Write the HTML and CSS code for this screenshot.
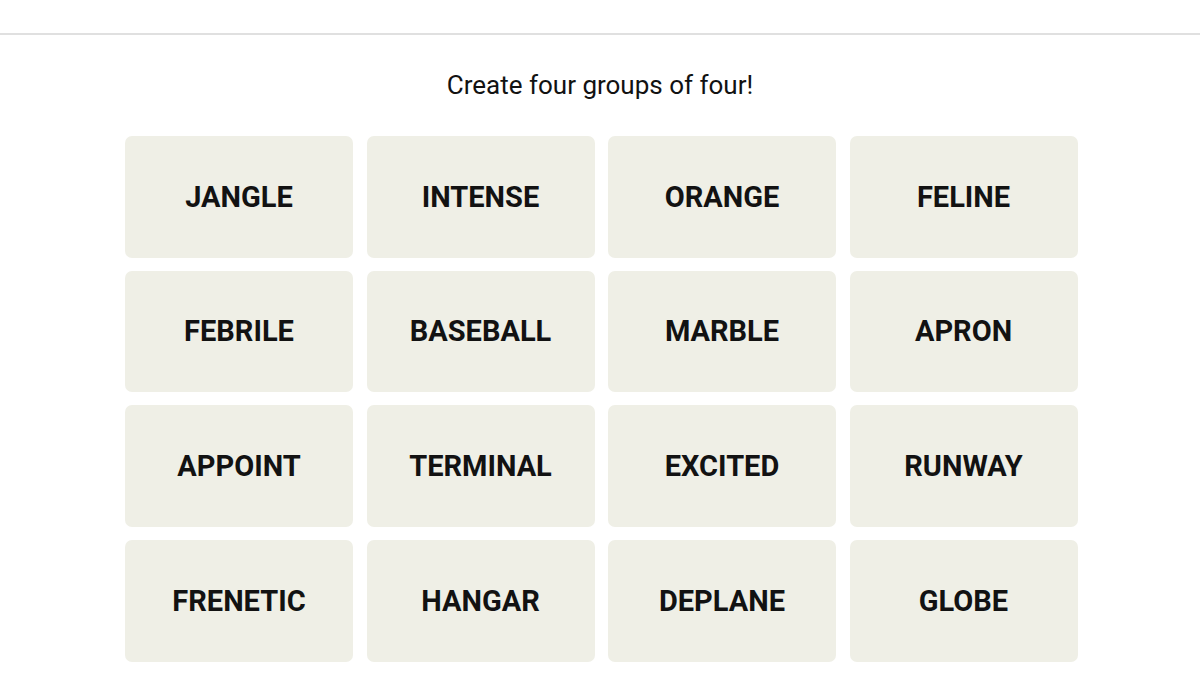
FILE: index.html
```html
<!DOCTYPE html>
<html>
    <head>
        <title>Connections</title>
        <link rel="stylesheet" href="styles.css">
    </head>
    <body>
        <div class="topbar"></div>

        <main class="board">
            <p class="prompt">Create four groups of four!</p>

            <div class="grid">
                <button class="tile">JANGLE</button>
                <button class="tile">INTENSE</button>
                <button class="tile">ORANGE</button>
                <button class="tile">FELINE</button>

                <button class="tile">FEBRILE</button>
                <button class="tile">BASEBALL</button>
                <button class="tile">MARBLE</button>
                <button class="tile">APRON</button>

                <button class="tile">APPOINT</button>
                <button class="tile">TERMINAL</button>
                <button class="tile">EXCITED</button>
                <button class="tile">RUNWAY</button>

                <button class="tile">FRENETIC</button>
                <button class="tile">HANGAR</button>
                <button class="tile">DEPLANE</button>
                <button class="tile">GLOBE</button>
            </div>
        </main>
    </body>
</html>
```

FILE: styles.css
```css
body {
    margin: 0;
    background-color: #fff;
    font-family: Roboto, "Liberation Sans", sans-serif;
    color: #121212;
}
.topbar {
    height: 33px;
    border-bottom: 2px solid #e0e0e0;
}
.board {
    display: flex;
    flex-direction: column;
    align-items: center;
}
.prompt {
    margin: 34px 0 0 0;
    font-size: 26px;
    line-height: 32px;
    font-weight: 400;
}
.grid {
    display: grid;
    grid-template-columns: repeat(4, 228px);
    grid-auto-rows: 121.5px;
    column-gap: 13.5px;
    row-gap: 13.2px;
    margin-top: 35px;
    margin-left: 2.5px;
}
.tile {
    border: none;
    border-radius: 7px;
    background-color: #efefe6;
    color: #121212;
    font-family: Roboto, "Liberation Sans", sans-serif;
    font-size: 29px;
    font-weight: 700;
    letter-spacing: 0;
    padding: 0;
    cursor: pointer;
}
```
